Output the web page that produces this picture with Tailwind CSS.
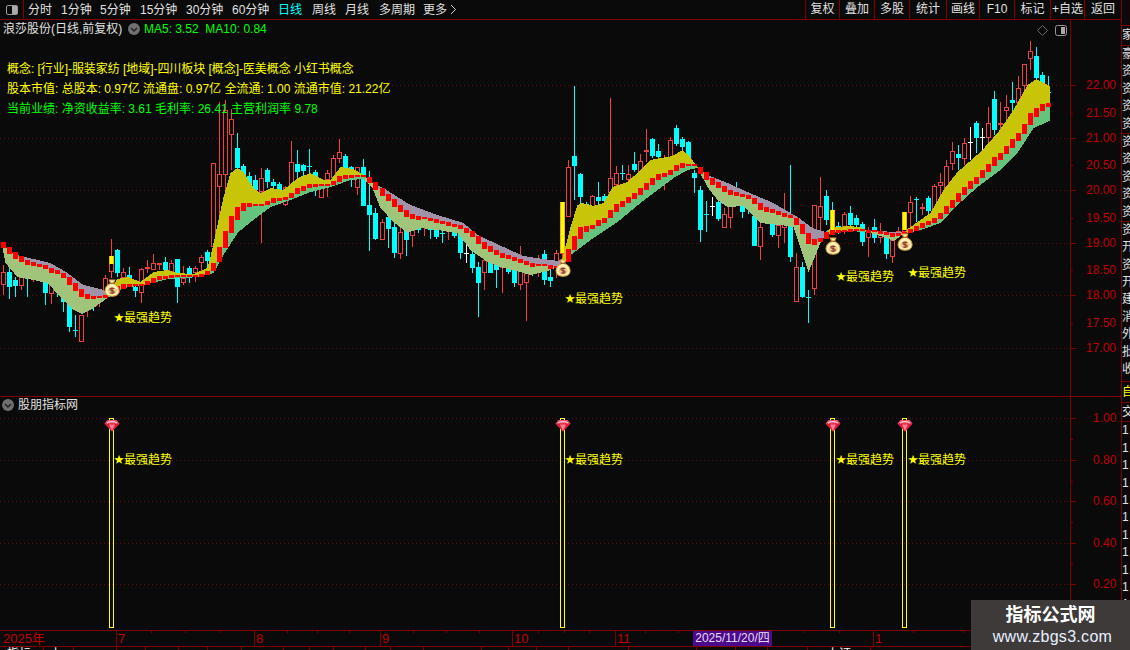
<!DOCTYPE html>
<html lang="zh">
<head>
  <meta charset="UTF-8" />
  <title>浪莎股份 日线</title>
  <script src="https://cdn.jsdelivr.net/npm/@tailwindcss/browser@4"></script>
</head>
<body class="bg-[#0a0a0a] text-[#e0e0e0] text-[12px] leading-none w-[1130px] h-[650px] overflow-hidden flex [font-family:'Liberation_Sans','Noto_Sans_CJK_SC',sans-serif]">

  <div class="w-[1122px] h-[650px] flex flex-col border-r border-[#800000] shrink-0">
    <!-- top bar -->
    <header class="h-[20px] shrink-0 flex items-center border-b border-[#800000] whitespace-nowrap">
      <div class="w-[24px] h-[19px] border-r border-[#800000] flex items-center justify-center">
        <div class="w-[12px] h-[10px] border border-[#999] rounded-[2px] flex justify-end"><div class="w-[5px] bg-[#aaa]"></div></div>
      </div>
      <nav class="flex items-center ml-[4px]">
        <span class="w-[33px]">分时</span>
        <span class="w-[39px]">1分钟</span>
        <span class="w-[40px]">5分钟</span>
        <span class="w-[46px]">15分钟</span>
        <span class="w-[46px]">30分钟</span>
        <span class="w-[46px]">60分钟</span>
        <span class="w-[34px] text-[#00ffff]">日线</span>
        <span class="w-[33px]">周线</span>
        <span class="w-[34px]">月线</span>
        <span class="w-[44px]">多周期</span>
        <span>更多</span>
        <svg class="ml-[3px]" width="7" height="11" viewBox="0 0 7 11"><path d="M1 1l4.500 4.500L1 10" fill="none" stroke="#d0d0d0"/></svg>
      </nav>
      <div class="ml-auto flex h-[19px] items-center text-center">
        <span class="w-[34px] h-full leading-[19px] border-l border-[#800000]">复权</span>
        <span class="w-[35px] h-full leading-[19px] border-l border-[#800000]">叠加</span>
        <span class="w-[35px] h-full leading-[19px] border-l border-[#800000]">多股</span>
        <span class="w-[37px] h-full leading-[19px] border-l border-[#800000]">统计</span>
        <span class="w-[33px] h-full leading-[19px] border-l border-[#800000]">画线</span>
        <span class="w-[35px] h-full leading-[19px] border-l border-[#800000]">F10</span>
        <span class="w-[36px] h-full leading-[19px] border-l border-[#800000]">标记</span>
        <span class="w-[34px] h-full leading-[19px] border-l border-[#800000]">+自选</span>
        <span class="w-[37px] h-full leading-[19px] border-l border-[#800000]">返回</span>
      </div>
    </header>

    <!-- price panel -->
    <section class="h-[377px] shrink-0 flex border-b border-[#800000]">
      <div class="w-[1070px] relative shrink-0">
        <svg id="priceChart" class="absolute inset-0" width="1070" height="376" viewBox="0 20 1070 376" shape-rendering="crispEdges"></svg>

        <div class="absolute left-[3px] top-[3px] flex items-center whitespace-nowrap">
          <span class="w-[125px]">浪莎股份(日线,前复权)</span>
          <svg width="12" height="12" viewBox="0 0 12 12"><circle cx="6" cy="6" r="6" fill="#707070"/><path d="M3 5l3 3 3-3" fill="none" stroke="#222" stroke-width="1.5"/></svg>
          <span class="ml-[4px] text-[#00ff00]">MA5: 3.52&nbsp; MA10: 0.84</span>
        </div>
        <svg class="absolute left-[1037px] top-[5px]" width="32" height="12" viewBox="0 0 32 12">
          <path d="M5.500 .5l5 5-5 5-5-5z" fill="none" stroke="#666"/>
          <rect x="18.500" y=".5" width="11" height="10" rx="2" fill="none" stroke="#999"/><rect x="24" y="2" width="4" height="7" fill="#aaa"/>
        </svg>

        <div class="absolute left-[7px] top-[43px] text-[#ffff00] whitespace-nowrap tracking-[-0.05px]">概念: [行业]-服装家纺 [地域]-四川板块 [概念]-医美概念 小红书概念</div>
        <div class="absolute left-[7px] top-[63px] text-[#ffff00] whitespace-nowrap">股本市值: 总股本: 0.97亿 流通盘: 0.97亿 全流通: 1.00 流通市值: 21.22亿</div>
        <div class="absolute left-[7px] top-[83px] text-[#00ff00] whitespace-nowrap">当前业绩: 净资收益率: 3.61 毛利率: 26.41 主营利润率 9.78</div>

        <div class="absolute left-[114px] top-[292px] text-[#ffff00] whitespace-nowrap flex items-center"><span class="w-[10px] text-[10px]">★</span>最强趋势</div>
        <div class="absolute left-[565px] top-[273px] text-[#ffff00] whitespace-nowrap flex items-center"><span class="w-[10px] text-[10px]">★</span>最强趋势</div>
        <div class="absolute left-[836px] top-[251px] text-[#ffff00] whitespace-nowrap flex items-center"><span class="w-[10px] text-[10px]">★</span>最强趋势</div>
        <div class="absolute left-[908px] top-[247px] text-[#ffff00] whitespace-nowrap flex items-center"><span class="w-[10px] text-[10px]">★</span>最强趋势</div>
      </div>
      <div id="priceAxis" class="relative flex-1 border-l border-[#800000]"></div>
    </section>

    <!-- indicator panel -->
    <section class="h-[233px] shrink-0 flex">
      <div class="w-[1070px] relative shrink-0">
        <svg id="indicatorChart" class="absolute inset-0" width="1070" height="233" viewBox="0 397 1070 233" shape-rendering="crispEdges"></svg>
        <div class="absolute left-[2px] top-[2px] flex items-center gap-[4px]">
          <svg width="12" height="12" viewBox="0 0 12 12"><circle cx="6" cy="6" r="6" fill="#707070"/><path d="M3 5l3 3 3-3" fill="none" stroke="#222" stroke-width="1.5"/></svg>
          <span>股朋指标网</span>
        </div>
        <div class="absolute left-[114px] top-[57px] text-[#ffff00] whitespace-nowrap flex items-center"><span class="w-[10px] text-[10px]">★</span>最强趋势</div>
        <div class="absolute left-[565px] top-[57px] text-[#ffff00] whitespace-nowrap flex items-center"><span class="w-[10px] text-[10px]">★</span>最强趋势</div>
        <div class="absolute left-[836px] top-[57px] text-[#ffff00] whitespace-nowrap flex items-center"><span class="w-[10px] text-[10px]">★</span>最强趋势</div>
        <div class="absolute left-[908px] top-[57px] text-[#ffff00] whitespace-nowrap flex items-center"><span class="w-[10px] text-[10px]">★</span>最强趋势</div>
      </div>
      <div id="indicatorAxis" class="relative flex-1 border-l border-[#800000]"></div>
    </section>

    <!-- time axis -->
    <div id="timeAxis" class="h-[17px] shrink-0 relative border-y border-[#800000] text-[#c00000] text-[13px]">
      <span class="absolute left-[3px] top-[1px]">2025年</span>
      <div class="absolute left-[693px] top-0 w-[79px] h-[15px] bg-[#4b0a8c] text-[#e6dcf5] text-[12px] leading-[15px] text-center whitespace-nowrap">2025/11/20/四</div>
    </div>
    <div id="bottomTabs" class="h-[3px] relative overflow-hidden"></div>
  </div>

  <!-- clipped stock list on the right edge -->
  <aside id="sideList" class="w-[8px] h-[650px] overflow-hidden flex flex-col shrink-0 text-[12px]"></aside>

  <!-- site watermark -->
  <div class="fixed left-[971px] top-[600px] w-[159px] h-[50px] bg-[#3e3a3a] flex flex-col items-center">
    <span class="mt-[5px] text-[18px] font-bold text-white leading-[20px]">指标公式网</span>
    <span class="mt-[2px] ml-[4px] text-[16px] text-[#e8f0ff] leading-[20px] tracking-[0.3px]">www.zbgs3.com</span>
  </div>

  <script>
    const BG = '#0a0a0a', RED = '#f04040', CYAN = '#00ffff';
    // red trend line, one y per bar
    const trend = [245,250,255,259,262,264,265,267,270,272,275,281,287,293,296,297,297,296,294,289,286,285,285,285,283,280,278,277,276,276,276,276,276,275,273,267,254,239,224,213,207,205,205,205,203,200,199,198,195,191,188,186,185,185,185,183,179,177,176,176,176,180,186,192,197,203,208,213,216,218,218,219,221,222,224,225,227,230,234,240,245,249,252,255,257,259,261,263,265,265,265,267,267,266,255,243,233,229,227,223,220,214,208,204,200,196,191,186,181,177,175,172,168,165,165,165,170,176,181,185,189,192,194,195,197,201,206,209,211,213,215,216,221,229,238,242,240,235,232,231,231,230,230,230,231,231,232,233,235,234,233,231,228,225,223,220,216,210,204,197,191,185,180,174,168,161,156,150,143,137,129,119,112,107,105];
    const upperEdge = [[3,249],[17,255],[33,259],[50,263],[67,273],[83,285],[100,289],[108,292],[117,279],[128,277],[140,282],[153,272],[167,270],[177,273],[193,274],[207,268],[210,257],[223,197],[230,173],[237,168],[243,172],[253,188],[260,193],[270,188],[283,190],[297,178],[310,173],[323,180],[330,180],[340,167],[353,169],[363,175],[370,183],[383,188],[397,197],[410,205],[437,215],[463,223],[477,235],[503,247],[523,256],[543,259],[558,261],[562,258],[570,227],[577,205],[582,203],[593,206],[603,203],[612,187],[627,182],[640,170],[650,160],[660,158],[672,156],[682,150],[688,155],[697,167],[707,175],[727,183],[747,192],[773,203],[797,217],[812,228],[825,232],[830,228],[847,226],[860,227],[867,231],[880,231],[893,232],[905,232],[907,229],[917,222],[930,213],[943,190],[957,172],[980,152],[997,133],[1013,110],[1027,85],[1036,79],[1049,86]];
    const lowerEdge = [[3,253],[5,263],[17,277],[33,280],[47,283],[60,297],[73,310],[82,314],[93,308],[107,298],[123,288],[143,285],[167,279],[197,277],[213,273],[223,255],[237,233],[250,222],[270,207],[290,200],[310,192],[330,187],[350,180],[363,179],[372,188],[380,208],[393,222],[407,233],[420,228],[437,230],[457,233],[470,250],[487,262],[503,268],[520,272],[530,275],[547,271],[557,267],[567,257],[577,250],[590,240],[617,222],[640,203],[673,178],[687,170],[697,168],[707,187],[717,200],[727,207],[743,206],[760,223],[780,225],[793,227],[808,272],[820,243],[825,235],[833,232],[847,231],[867,232],[883,237],[893,241],[903,234],[923,229],[940,223],[957,205],[977,187],[1000,170],[1017,153],[1033,128],[1049,121]];
    // falling stretches of the ribbon are grey over pale green, the rest yellow over green
    const falling = [[0,108],[365,562],[698,828],[868,905]];

    // x, type (0 hollow red, 1 cyan, 2 white), body top, body bottom, high, low
    const bars = [
      [3,0,272,285,265,295],[9,1,272,287,262,299],[15,1,280,286,277,297],[21,0,275,286,265,290],[27,1,268,276,265,297],[33,0,275,279,270,282],[39,1,268,274,264,280],[45,1,277,293,270,305],[51,0,283,294,277,304],[57,1,285,288,278,297],
      [63,1,294,302,288,312],[69,1,303,327,300,332],[75,1,330,332,315,337],[81,0,315,342,315,342],[87,0,296,304,290,317],[93,1,296,304,290,311],[99,0,296,302,290,307],[105,0,278,295,275,295],[111,0,262,272,239,278],[117,1,250,273,249,277],
      [123,0,272,278,268,278],[129,1,275,279,267,283],[135,1,287,291,282,297],[141,0,269,293,268,303],[147,0,267,269,260,273],[153,0,263,270,254,270],[159,0,263,265,263,270],[165,1,262,270,257,277],[171,0,263,272,260,275],[177,1,259,287,259,303],
      [183,0,278,283,266,285],[189,1,268,278,266,283],[195,0,268,273,266,282],[201,0,257,263,255,275],[207,1,252,261,250,268],[213,0,163,247,163,250],[219,0,174,187,102,250],[225,0,110,175,100,240],[231,0,119,135,109,170],[237,1,148,168,133,180],
      [243,1,166,176,164,180],[249,1,176,186,172,190],[255,1,180,190,175,195],[261,0,178,192,168,243],[267,1,170,182,168,188],[273,1,182,186,179,190],[279,1,184,190,182,196],[285,0,187,205,186,206],[291,0,162,190,141,195],[297,1,164,172,150,183],
      [303,1,165,171,164,180],[309,1,166,168,149,180],[315,1,172,186,170,196],[321,0,188,198,185,198],[327,0,173,180,170,197],[333,0,158,178,155,185],[339,0,152,159,139,163],[345,1,156,170,154,176],[351,1,167,172,166,187],[357,0,167,188,167,195],
      [363,1,167,206,159,206],[369,1,205,215,171,251],[375,1,213,239,208,240],[381,0,222,240,219,240],[387,1,217,229,208,248],[393,1,227,253,222,258],[399,0,232,254,225,259],[405,1,228,240,226,256],[411,0,225,236,222,247],[417,1,222,230,216,233],
      [423,0,218,228,214,236],[429,1,220,230,212,239],[435,1,217,237,215,239],[441,1,233,235,226,243],[447,0,223,232,219,240],[453,1,225,236,222,238],[459,1,233,253,228,259],[465,2,253,254,242,263],[471,1,254,268,250,273],[477,1,267,283,262,317],
      [483,0,260,273,255,290],[489,1,260,273,255,273],[495,1,260,270,256,288],[501,0,258,268,256,293],[507,1,262,272,258,274],[513,1,260,283,258,287],[519,0,260,285,246,290],[525,0,267,283,264,321],[531,1,262,272,260,276],[537,0,262,270,255,277],
      [543,1,254,280,250,285],[549,1,277,281,270,287],[555,0,253,263,250,278],[561,0,245,254,235,260],[569,0,167,217,160,217],[575,1,156,166,86,200],[581,1,174,197,173,204],[587,1,204,207,202,212],[593,0,196,207,195,212],[599,1,197,201,182,207],
      [605,1,196,201,194,205],[611,0,178,193,98,195],[617,0,173,185,166,190],[623,1,173,175,165,180],[629,0,174,180,165,183],[635,1,164,170,152,172],[641,0,161,173,154,175],[647,0,150,152,129,162],[653,1,139,156,138,158],[659,1,151,157,144,160],
      [665,0,158,170,155,190],[671,0,140,158,137,160],[677,1,128,144,125,146],[683,1,139,147,137,150],[689,1,142,158,141,160],[695,1,173,178,170,193],[701,1,190,230,186,242],[707,1,214,216,201,232],[713,2,206,208,197,216],[719,1,202,219,198,221],
      [725,0,214,228,208,228],[731,0,206,218,200,228],[737,1,195,203,182,205],[743,1,203,212,195,218],[749,1,200,208,195,214],[755,1,216,246,212,246],[761,0,227,247,222,260],[767,1,212,220,208,223],[773,1,223,235,215,237],[779,0,225,236,220,248],
      [785,0,220,228,193,243],[791,1,225,257,165,262],[797,0,267,302,253,302],[803,1,267,297,262,298],[809,1,297,299,290,323],[815,0,205,289,205,295],[821,0,206,218,177,230],[827,1,196,220,190,225],[833,1,212,222,202,230],[839,1,226,230,222,234],
      [845,0,214,227,212,234],[851,1,213,225,206,228],[857,1,218,225,215,230],[863,1,224,242,222,246],[869,0,232,238,227,257],[875,1,227,238,219,243],[881,0,233,238,223,243],[887,1,237,254,234,259],[893,0,240,257,236,263],[899,0,231,234,227,238],
      [905,0,228,232,222,236],[911,0,202,213,196,228],[917,1,199,201,197,222],[923,0,207,209,203,215],[929,1,198,211,196,216],[935,0,186,217,184,217],[941,0,182,186,173,195],[947,0,166,190,160,195],[953,0,151,164,142,170],[959,1,154,158,145,170],
      [965,0,143,159,138,165],[971,2,142,144,127,160],[977,1,123,138,121,153],[983,2,137,139,128,150],[989,0,123,138,107,145],[995,1,99,130,91,135],[1001,0,123,125,102,133],[1007,0,107,111,95,122],[1013,1,100,103,82,113],[1019,0,88,103,76,110],
      [1025,0,64,86,64,95],[1031,0,51,59,41,70],[1037,1,56,78,47,85],[1043,1,75,85,72,90],[1049,1,92,94,76,94]
    ];

    const lerp = (pts, x) => {
      for (let k = 1; k < pts.length; k++) {
        if (x <= pts[k][0]) {
          const [x0, y0] = pts[k - 1], [x1, y1] = pts[k];
          return y0 + (y1 - y0) * (x - x0) / (x1 - x0);
        }
      }
      return pts[pts.length - 1][1];
    };
    const barLeft = i => Math.round(1 + i * 6.008);
    const trendPts = trend.map((y, i) => [barLeft(i) + 2, y]);
    const rect = (x, y, w, h, fill) => `<rect x="${x}" y="${y}" width="${w}" height="${h}" fill="${fill}"/>`;
    const dotted = (y, x2) => `<line x1="0" x2="${x2}" y1="${y}.5" y2="${y}.5" stroke="#5c0c0c" stroke-dasharray="1 3"/>`;

    function bag(cx, cy) {
      return `<g transform="translate(${cx - 7.5} ${cy - 8.5}) scale(1.08)" shape-rendering="auto">
        <path d="M4.500 .5h5l-1.300 3.200c3.400 1.400 5.300 4 5.300 6.800 0 3-2.800 5-6.500 5s-6.500-2-6.500-5c0-2.800 1.900-5.400 5.300-6.800z" fill="#fff2b8" stroke="#d9a43a"/>
        <path d="M4.500 3.500h5" stroke="#a8641c" stroke-width="1.200"/>
        <ellipse cx="7" cy="10.500" rx="4.300" ry="3.300" fill="#f2c98a"/>
        <path d="M9 8.500c-1-.8-4-.8-4 .7s4 .8 4 2.300-3 1.500-4 .6M7 7.500v6" fill="none" stroke="#8a3a2a" stroke-width="1.100"/>
      </g>`;
    }
    function ruby(cx, cy) {
      return `<g transform="translate(${cx - 8} ${cy - 6})" shape-rendering="auto">
        <path d="M3.500 1h9l3 3.500-7.500 8-7.500-8z" fill="#f0506a"/>
        <path d="M.5 4.500h15l-7.500 8z" fill="#e01838"/>
        <path d="M3 4.200c2-2 8-2 10 0" fill="none" stroke="#ffd8dc" stroke-width="1.200"/>
        <path d="M5 5.500l3 6.500 3-6.500" fill="#ff8090"/>
      </g>`;
    }

    function renderPrice() {
      let html = '';
      [85, 138, 190, 243, 295, 348].forEach(y => html += dotted(y, 1070));

      bars.forEach(([x, type, top, bot, hi, lo]) => {
        const i = Math.round((x - 3) / 6), left = barLeft(i), mid = left + 2;
        const color = type === 0 ? RED : type === 1 ? CYAN : '#ffffff';
        html += rect(mid, hi, 1, lo - hi, color);
        if (type === 0) {
          html += `<rect x="${left + .5}" y="${top + .5}" width="4" height="${bot - top - 1}" fill="${BG}" stroke="${RED}"/>`;
        } else if (bot - top <= 2) {
          html += rect(left, top, 5, 1, color);
        } else {
          html += rect(left, top, 5, bot - top, color);
        }
      });

      // ribbon, one pixel column at a time like the terminal draws it
      for (let x = 3; x <= 1049; x++) {
        const up = Math.round(lerp(upperEdge, x)), md = Math.round(lerp(trendPts, x)), lw = Math.round(lerp(lowerEdge, x));
        const fall = falling.some(([a, b]) => x >= a && x < b);
        if (md > up) html += rect(x, up, 1, md - up, fall ? '#a092a8' : '#c8c408');
        if (lw > md) html += rect(x, md, 1, lw - md, fall ? '#a0c47a' : '#64c47e');
      }

      // yellow signal bars on the trigger days
      [[18, 256, 264], [93, 202, 253], [138, 210, 230], [150, 212, 230]].forEach(([i, t, b]) => {
        const l = barLeft(i);
        html += rect(l, t, 5, b - t, '#ffa818') + rect(l + 1, t, 3, b - t, '#ffff00');
      });

      trend.forEach((y, i) => {
        const d = i ? Math.abs(y - trend[i - 1]) : 4;
        const h = Math.max(2, d + 2);
        html += rect(barLeft(i), Math.round(y - h / 2), 5, h, '#ff0000');
      });

      [[112, 288], [563, 268], [833, 246], [905, 242]].forEach(([x, y]) => html += bag(x, y));
      document.getElementById('priceChart').innerHTML = html;

      const axis = document.getElementById('priceAxis');
      const labels = [['22.00',85],['21.50',113],['21.00',138],['20.50',165],['20.00',190],['19.50',218],['19.00',243],['18.50',270],['18.00',295],['17.50',323],['17.00',348]];
      axis.innerHTML = labels.map(([t, y], k) => `
        <div class="absolute left-0 h-px bg-[#800000] ${k % 2 ? 'w-[2px]' : 'w-[5px]'}" style="top:${y - 20}px"></div>
        <span class="absolute left-[15px] text-[12px] text-[#c00000]" style="top:${y - 26}px">${t}</span>`).join('');
    }

    function renderIndicator() {
      let html = '';
      [418, 460, 501, 543, 584].forEach(y => html += dotted(y, 1070));
      [18, 93, 138, 150].forEach(i => {
        const l = barLeft(i);
        html += `<rect x="${l + .5}" y="418.500" width="4" height="209" fill="none" stroke="#ffff00"/>`;
      });
      [112, 563, 833, 905].forEach(x => html += ruby(x, 425));
      document.getElementById('indicatorChart').innerHTML = html;

      const axis = document.getElementById('indicatorAxis');
      const labels = [['1.00',418],['0.80',460],['0.60',501],['0.40',543],['0.20',584]];
      axis.innerHTML = labels.map(([t, y]) => `
        <div class="absolute left-0 h-px w-[5px] bg-[#800000]" style="top:${y - 397}px"></div>
        <div class="absolute left-0 h-px w-[2px] bg-[#800000]" style="top:${y - 397 + 21}px"></div>
        <span class="absolute left-[22px] text-[12px] text-[#c00000]" style="top:${y - 403}px">${t}</span>`).join('');
    }

    function renderTime() {
      const el = document.getElementById('timeAxis');
      const months = [[116,'7'],[254,'8'],[380,'9'],[512,'10'],[615,'11'],[873,'1']];
      const ticks = [151,185,220,287,317,349,413,446,479,538,564,589,645,678,804,839,913,963];
      el.insertAdjacentHTML('beforeend',
        months.map(([x, t]) => `<div class="absolute top-0 h-[15px] w-px bg-[#800000]" style="left:${x}px"></div><span class="absolute top-[1px]" style="left:${x + 2}px">${t}</span>`).join('') +
        ticks.map(x => `<div class="absolute top-0 h-[2px] w-px bg-[#800000]" style="left:${x}px"></div>`).join(''));
      const tabs = [43,73,116,145,178,207,241,283,309,333,365,390,423,481,508,536,568,628,696,735,767,807,870];
      document.getElementById('bottomTabs').innerHTML = tabs.map(x => `<div class="absolute top-0 h-[3px] w-px bg-[#800000]" style="left:${x}px"></div>`).join('') +
        '<span class="absolute left-[7px] top-[1px] text-[12px] text-white">指标</span><span class="absolute left-[50px] top-[1px] text-[12px] text-white">上</span><span class="absolute left-[827px] top-[1px] text-[12px] text-white">上证</span>';
    }

    function renderSide() {
      const row = (t, cls = 'text-[#e0e0e0]') => `<div class="h-[17.400px] shrink-0 leading-[17px] whitespace-nowrap ${cls}">${t}</div>`;
      const line = '<div class="h-px shrink-0 w-full bg-[#800000]"></div>';
      const upper = ['豪','资','资','资','资','资','资','资','资','资','资','开','资','开','建','消','外','批','收'];
      let html = '<div class="h-[25px] shrink-0"></div>' + line + '<div class="h-[19px] shrink-0 leading-[18px] text-[#e0e0e0]">家</div>' + line;
      upper.forEach((t, k) => {
        html += row(t);
        if (k === 4 || k === 9) html += line;
      });
      html += '<div class="h-[3px] shrink-0"></div>' + line;
      html += '<div class="h-[20px] shrink-0 leading-[20px] text-[#ffff00]">自</div>' + line;
      html += '<div class="h-[18px] shrink-0 leading-[18px] text-[#e0e0e0]">交</div>' + line;
      for (let k = 0; k < 12; k++) html += row('1');
      document.getElementById('sideList').innerHTML = html;
    }

    renderPrice();
    renderIndicator();
    renderTime();
    renderSide();
  </script>
</body>
</html>
